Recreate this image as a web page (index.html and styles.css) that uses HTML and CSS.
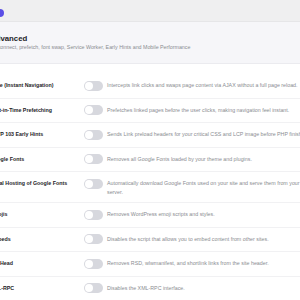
FILE: index.html
```html
<!DOCTYPE html>
<html lang="en">

<head>
    <meta charset="UTF-8">
    <meta name="viewport" content="width=device-width, initial-scale=1.0">
    <title>Advanced</title>
    <link rel="stylesheet" href="styles.css">
</head>

<body>
    <div class="top_bar">
        <span class="logo_dot"></span>
    </div>
    <div class="page">
        <div class="section_head">
            <h2>Advanced</h2>
            <p>preconnect, prefetch, font swap, Service Worker, Early Hints and Mobile Performance</p>
        </div>
        <div class="option_list">
            <div class="option_row">
                <div class="option_title">Page (Instant Navigation)</div>
                <div class="toggle"><span></span></div>
                <div class="option_desc">Intercepts link clicks and swaps page content via AJAX without a full page reload.</div>
            </div>
            <div class="option_row">
                <div class="option_title">Just-in-Time Prefetching</div>
                <div class="toggle"><span></span></div>
                <div class="option_desc">Prefetches linked pages before the user clicks, making navigation feel instant.</div>
            </div>
            <div class="option_row">
                <div class="option_title">HTTP 103 Early Hints</div>
                <div class="toggle"><span></span></div>
                <div class="option_desc nowrap">Sends Link preload headers for your critical CSS and LCP image before PHP finishes.</div>
            </div>
            <div class="option_row">
                <div class="option_title">Google Fonts</div>
                <div class="toggle"><span></span></div>
                <div class="option_desc">Removes all Google Fonts loaded by your theme and plugins.</div>
            </div>
            <div class="option_row">
                <div class="option_title">Local Hosting of Google Fonts</div>
                <div class="toggle"><span></span></div>
                <div class="option_desc">Automatically download Google Fonts used on your site and serve them from your server.</div>
            </div>
            <div class="option_row">
                <div class="option_title">Emojis</div>
                <div class="toggle"><span></span></div>
                <div class="option_desc">Removes WordPress emoji scripts and styles.</div>
            </div>
            <div class="option_row">
                <div class="option_title">Embeds</div>
                <div class="toggle"><span></span></div>
                <div class="option_desc">Disables the script that allows you to embed content from other sites.</div>
            </div>
            <div class="option_row">
                <div class="option_title">WP Head</div>
                <div class="toggle"><span></span></div>
                <div class="option_desc">Removes RSD, wlwmanifest, and shortlink links from the site header.</div>
            </div>
            <div class="option_row">
                <div class="option_title">XML-RPC</div>
                <div class="toggle"><span></span></div>
                <div class="option_desc">Disables the XML-RPC interface.</div>
            </div>
        </div>
    </div>
</body>

</html>
```
FILE: styles.css
```css
* {
    margin: 0;
    padding: 0;
    box-sizing: border-box;
}

html,
body {
    width: 100%;
    height: 100%;
    overflow: hidden;
}

body {
    background-color: #fff;
    font-family: "Liberation Sans", Arial, sans-serif;
    color: #1d2327;
}

.top_bar {
    height: 22px;
    background-color: #efeff0;
    border-bottom: 1px solid #e6e6e8;
    box-shadow: 0 1px 2px rgba(0, 0, 0, 0.04);
    display: flex;
    align-items: center;
}

.logo_dot {
    width: 8px;
    height: 8px;
    margin-left: -4px;
    margin-top: 5px;
    border-radius: 50%;
    background-color: #5a4ee6;
}

.page {
    margin-left: -10px;
    width: 340px;
}

.section_head {
    background-color: #f6f6f9;
    border-bottom: 1px solid #ebebef;
    padding: 12px 0 11px 0;
    height: 42px;
}

.section_head h2 {
    font-size: 7.8px;
    line-height: 9px;
    font-weight: bold;
    color: #1d2327;
}

.section_head p {
    margin-top: 1px;
    font-size: 5.3px;
    line-height: 7px;
    color: #8a8c91;
}

.option_list {
    padding-top: 10px;
}

.option_row {
    display: flex;
    align-items: flex-start;
    padding: 5px 0;
    border-bottom: 1px solid #f1f1f3;
}

.option_title {
    width: 94px;
    padding-top: 2px;
    font-size: 5.3px;
    line-height: 9px;
    font-weight: bold;
    color: #1d2327;
    white-space: nowrap;
}

.toggle {
    width: 19px;
    height: 10px;
    margin-top: 1.5px;
    margin-bottom: 2px;
    margin-right: 4px;
    flex-shrink: 0;
    border-radius: 5px;
    background-color: #d7d8de;
    padding: 1px;
}

.toggle span {
    display: block;
    width: 8px;
    height: 8px;
    border-radius: 50%;
    background-color: #fff;
}

.option_desc {
    width: 206px;
    padding-top: 2px;
    font-size: 5.3px;
    line-height: 9px;
    color: #8a8c91;
}

.option_desc.nowrap {
    white-space: nowrap;
}
```
